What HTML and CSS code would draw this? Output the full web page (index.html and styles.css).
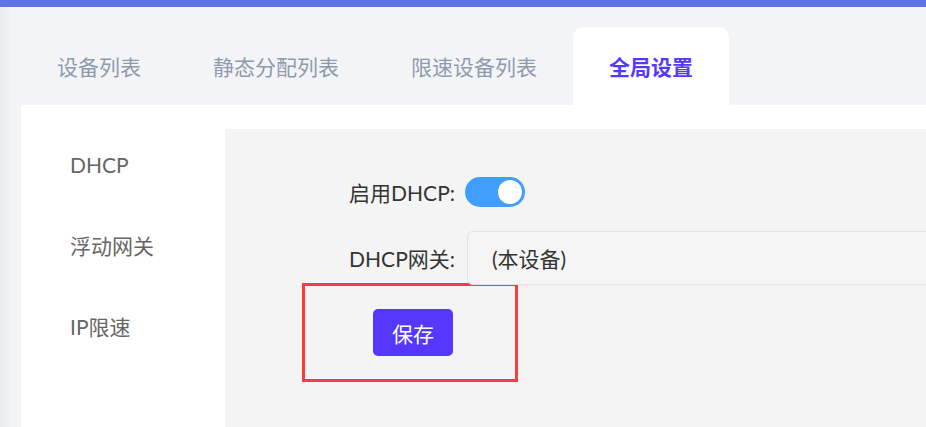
FILE: index.html
```html
<!DOCTYPE html>
<html lang="zh-CN">
<head>
    <meta charset="UTF-8">
    <meta name="viewport" content="width=device-width, initial-scale=1.0">
    <title>全局设置</title>
    <link rel="stylesheet" href="styles.css">
</head>
<body>
    <div class="topbar"></div>
    <div class="page">
        <!-- tabs -->
        <div class="tabs">
            <a class="tab" href="#">设备列表</a>
            <a class="tab" href="#">静态分配列表</a>
            <a class="tab" href="#">限速设备列表</a>
            <a class="tab active" href="#">全局设置</a>
        </div>

        <div class="panel">
            <ul class="side-menu">
                <li>DHCP</li>
                <li>浮动网关</li>
                <li>IP限速</li>
            </ul>

            <div class="content">
                <div class="form-row">
                    <label class="form-label">启用DHCP:</label>
                    <div class="switch on"><span class="knob"></span></div>
                </div>
                <div class="form-row">
                    <label class="form-label">DHCP网关:</label>
                    <div class="select-box">(本设备)</div>
                </div>
                <div class="save-box">
                    <button class="save-btn" type="button">保存</button>
                </div>
            </div>
        </div>
    </div>
</body>
</html>
```

FILE: styles.css
```css
html, body {
    margin: 0;
    padding: 0;
    height: 100%;
    overflow: hidden;
}
body {
    font-family: Lato, "Noto Sans CJK SC", sans-serif;
    background: linear-gradient(to right, #e9eaee 0, #f3f4f6 12px);
    color: #333;
}
.topbar {
    height: 7px;
    background-color: #6074e1;
}
.page {
    padding-left: 21px;
}
.tabs {
    display: flex;
    padding-top: 20px;
}
.tab {
    display: flex;
    align-items: center;
    height: 78px;
    padding: 0 36px;
    font-size: 21px;
    color: #8e9aae;
    text-decoration: none;
    border-radius: 10px 10px 0 0;
}
.tab.active {
    background-color: #fff;
    color: #5538ff;
    font-weight: bold;
}
.panel {
    display: flex;
    background-color: #fff;
    height: 322px;
}
.side-menu {
    flex: none;
    list-style: none;
    margin: 0;
    padding: 19px 0 0 49px;
    width: 155px;
}
.side-menu li {
    height: 81px;
    line-height: 81px;
    font-size: 21px;
    color: #666;
}
.content {
    flex: 1;
    min-width: 0;
    margin-top: 24px;
    background-color: #f4f4f4;
    padding-top: 36px;
}
.form-row {
    display: flex;
    align-items: center;
    height: 54px;
    margin-bottom: 12px;
}
.form-label {
    flex: none;
    width: 130px;
    margin-left: 100px;
    margin-right: 10px;
    text-align: right;
    font-size: 21px;
    color: #333;
}
.switch {
    flex: none;
    position: relative;
    width: 60px;
    height: 30px;
    border-radius: 15px;
    background-color: #409eff;
}
.switch .knob {
    position: absolute;
    top: 3px;
    right: 3px;
    width: 24px;
    height: 24px;
    border-radius: 50%;
    background-color: #fff;
}
.select-box {
    flex: none;
    box-sizing: border-box;
    width: 500px;
    height: 54px;
    margin-left: 2px;
    padding: 0 24px;
    display: flex;
    align-items: center;
    border: 1px solid #e2e2e4;
    border-radius: 6px;
    background-color: #f5f5f5;
    font-size: 21px;
    color: #333;
}
.save-box {
    box-sizing: border-box;
    width: 216px;
    height: 99px;
    margin-left: 77px;
    margin-top: -14px;
    padding: 23px 0 0 68px;
    border: 3px solid #ff3a3a;
}
.save-btn {
    width: 80px;
    height: 47px;
    border: none;
    border-radius: 5px;
    background-color: #5538ff;
    color: #fff;
    font-family: inherit;
    font-size: 21px;
    cursor: pointer;
}
```
